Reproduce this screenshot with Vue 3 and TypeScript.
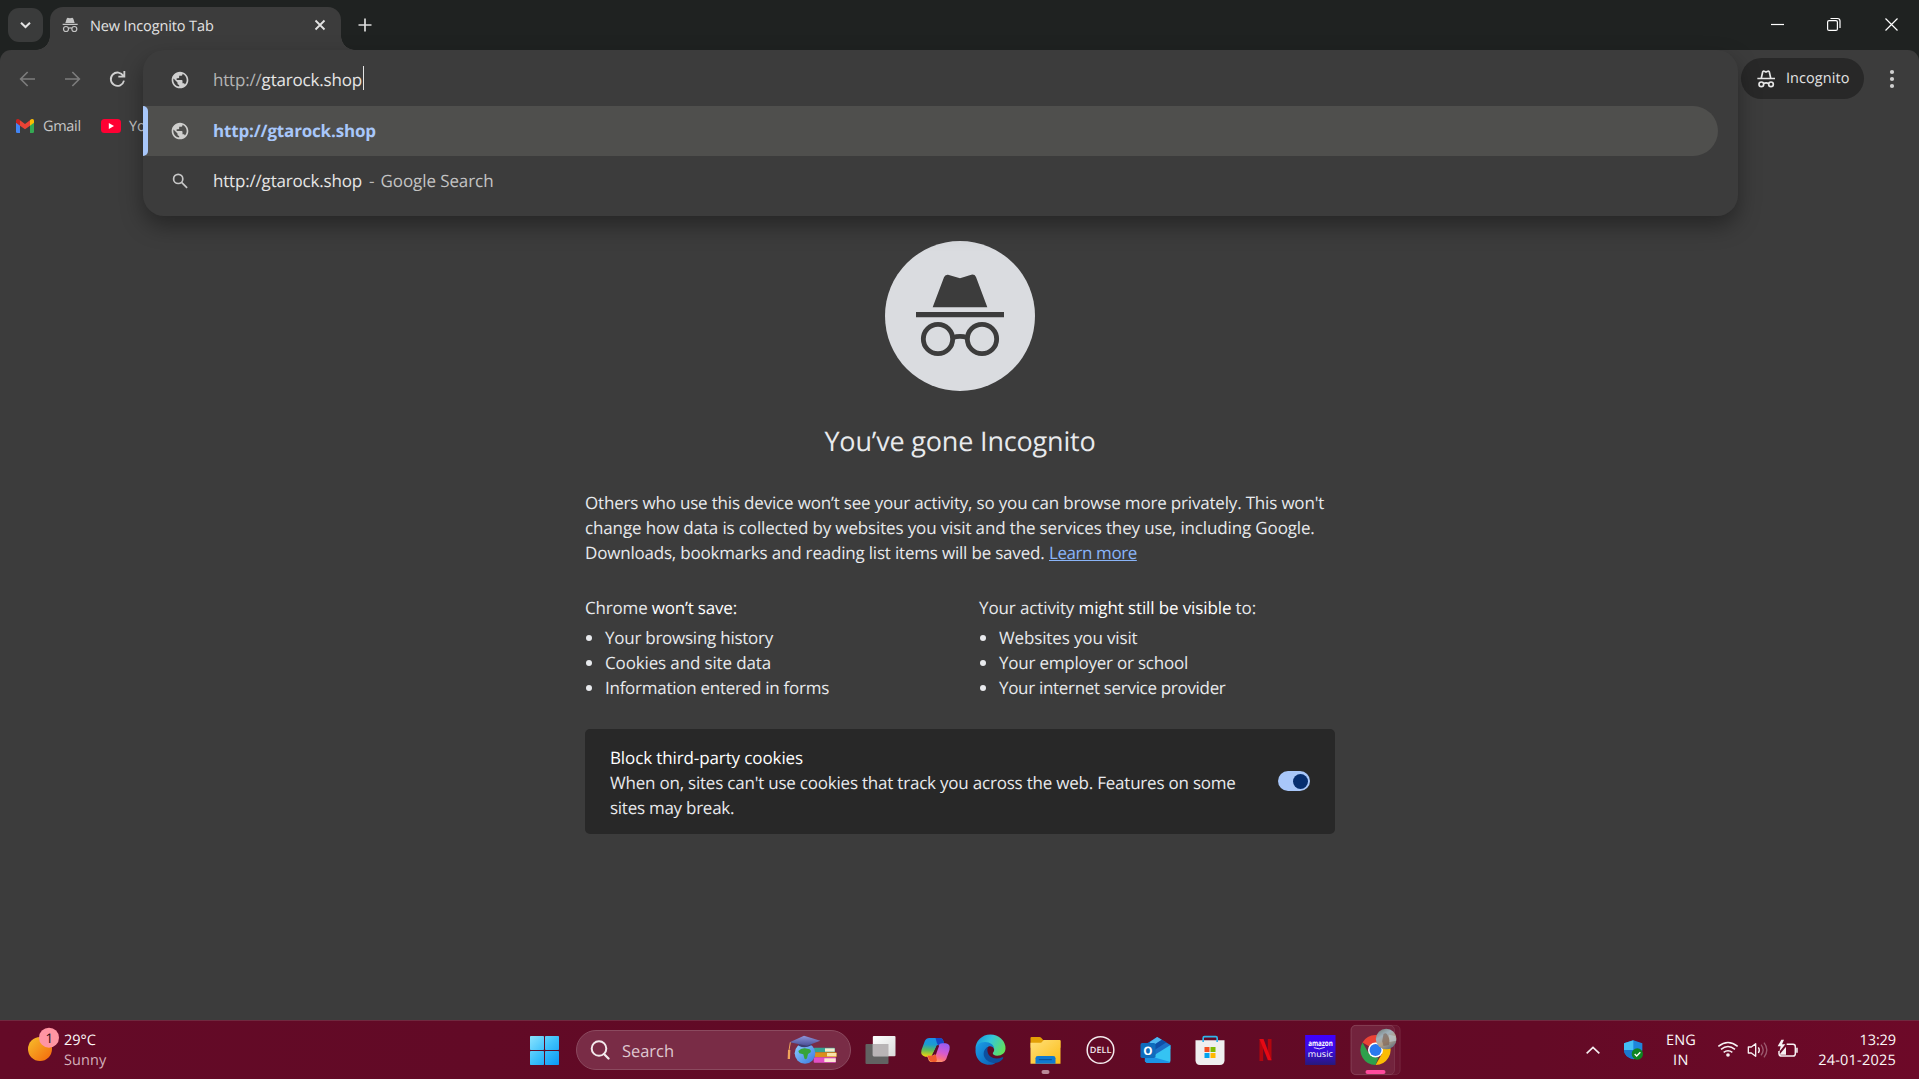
<script setup lang="ts">
interface Line {
  text: string
  track: number
}

const intro: Line[] = [
  { text: "Others who use this device won’t see your activity, so you can browse more privately. This won't", track: -0.182 },
  { text: 'change how data is collected by websites you visit and the services they use, including Google.', track: -0.14 },
]

const kept: Line[] = [
  { text: 'Your browsing history', track: -0.25 },
  { text: 'Cookies and site data', track: -0.138 },
  { text: 'Information entered in forms', track: -0.265 },
]

const visible: Line[] = [
  { text: 'Websites you visit', track: -0.138 },
  { text: 'Your employer or school', track: -0.224 },
  { text: 'Your internet service provider', track: -0.316 },
]

const cookieText: Line[] = [
  { text: "When on, sites can't use cookies that track you across the web. Features on some", track: -0.214 },
  { text: 'sites may break.', track: -0.26 },
]

const spacing = (line: Line) => ({ letterSpacing: line.track + 'px' })

const globePath =
  'M12 2C6.48 2 2 6.48 2 12s4.48 10 10 10 10-4.48 10-10S17.52 2 12 2zm-1 17.93c-3.95-.49-7-3.85-7-7.93 0-.62.08-1.21.21-1.79L9 15v1c0 1.100.9 2 2 2v1.930zm6.900-2.540c-.26-.81-1-1.390-1.900-1.390h-1v-3c0-.55-.45-1-1-1H8v-2h2c.55 0 1-.45 1-1V7h2c1.100 0 2-.9 2-2v-.41c2.930 1.190 5 4.060 5 7.410 0 2.080-.8 3.970-2.100 5.390z'
</script>

<template>
  <div class="desktop">
    <header class="tabstrip">
      <div class="tab-search">
        <svg width="35" height="34" viewBox="24 24 105 102"><path d="M63 68l13.500 13 13.500-13" fill="none" stroke="#e3e3e3" stroke-width="6" /></svg>
      </div>
      <div class="tab">
        <svg class="tab-icon" width="16" height="16" viewBox="186 51 48 48" fill="#c4c4c4">
          <path d="M200 56q2-4 6-2l4 1 4-1q4-2 6 2l4 13h-28zM188 71h45v4h-45z" />
          <g fill="none" stroke="#c4c4c4" stroke-width="3.500"><circle cx="198" cy="87" r="7.500" /><circle cx="223" cy="87" r="7.500" /><path d="M205 85q5-3 11 0" /></g>
        </svg>
        <span class="tab-title">New Incognito Tab</span>
        <svg class="tab-close" width="14" height="14" viewBox="0 0 14 14"><path d="M2.500 2.500l9 9M11.500 2.500l-9 9" stroke="#e3e3e3" stroke-width="1.800" /></svg>
      </div>
      <svg class="new-tab" width="16" height="16" viewBox="0 0 16 16"><path d="M8 1.500v13M1.500 8h13" stroke="#dcdcdc" stroke-width="1.700" /></svg>
      <div class="window-buttons">
        <svg width="57" height="50" viewBox="0 0 57 50"><path d="M22 24.500h13" stroke="#fff" stroke-width="1.200" /></svg>
        <svg width="57" height="50" viewBox="0 0 57 50" fill="none" stroke="#fff" stroke-width="1.200"><rect x="21.600" y="20.600" width="9.800" height="9.800" rx="1.500" /><path d="M24.500 18.500h7q2.500 0 2.500 2.500v7" /></svg>
        <svg width="57" height="50" viewBox="0 0 57 50"><path d="M22.500 18.500l12 12M34.500 18.500l-12 12" stroke="#fff" stroke-width="1.200" /></svg>
      </div>
    </header>

    <div class="browser">
      <div class="toolbar">
        <svg class="nav" width="144" height="58" viewBox="0 150 432 174" fill="none" stroke-width="5">
          <path d="M105 237H63M83 216l-21 21 21 21" stroke="#7c7c7c" />
          <path d="M195 237h42M217 216l21 21-21 21" stroke="#7c7c7c" />
          <path d="M370 228a20 20 0 1 0 2 14M373 213v17h-18" stroke="#d0d0d0" stroke-width="5.500" />
        </svg>
        <div class="incognito-pill">
          <svg width="18" height="18" viewBox="171 207 54 54" fill="none" stroke="#e6e6e6" stroke-width="5">
            <path d="M172 232.500h53M184 231l4-18q1-4 5-2l5 2 5-2q4-2 5 2l4 18" />
            <circle cx="184" cy="250" r="7" /><circle cx="213" cy="250" r="7" /><path d="M190 248q8-5 17 0" />
          </svg>
          <span>Incognito</span>
        </div>
        <svg class="more" width="6" height="20" viewBox="0 0 6 20" fill="#d0d0d0"><circle cx="3" cy="3" r="2.100" /><circle cx="3" cy="10" r="2.100" /><circle cx="3" cy="17" r="2.100" /></svg>
      </div>

      <nav class="bookmarks">
        <svg width="18" height="14" viewBox="48 357 54 42">
          <path d="M48 366l12 9v24h-8q-4 0-4-4z" fill="#4285f4" />
          <path d="M102 366l-12 9v24h8q4 0 4-4z" fill="#34a853" />
          <path d="M90 361q5-6 10-3 2 2 2 5v5l-12 9z" fill="#fbbc04" />
          <path d="M60 361l15 11 15-11v16l-15 11-15-11z" fill="#ea4335" />
          <path d="M60 361q-5-6-10-3-2 2-2 5v5l12 9z" fill="#c5221f" />
        </svg>
        <span class="gmail">Gmail</span>
        <svg width="20" height="14" viewBox="0 0 20 14"><rect width="20" height="14" rx="3.500" fill="#ff0033" /><path d="M7.800 4v6l5.200-3z" fill="#fff" /></svg>
        <span class="youtube">Yo</span>
      </nav>

      <section class="omnibox">
        <div class="field">
          <svg width="20" height="20" viewBox="0 0 24 24" fill="#d0d0d0"><path :d="globePath" /></svg>
          <span class="url"><i>http://</i>gtarock.shop</span><b class="caret"></b>
        </div>
        <div class="suggestion active">
          <svg width="20" height="20" viewBox="0 0 24 24" fill="#cfcfcd"><path :d="globePath" /></svg>
          <span class="match">http://gtarock.shop</span>
        </div>
        <div class="suggestion">
          <svg width="20" height="20" viewBox="0 0 20 20" fill="none" stroke="#c7c7c7" stroke-width="1.700"><circle cx="8.200" cy="7.900" r="4.600" /><path d="M11.600 11.300l5.500 5.500" /></svg>
          <span class="query">http://gtarock.shop</span><span class="dash">-</span><span class="engine">Google Search</span>
        </div>
      </section>

      <main class="page">
        <svg class="hero" width="150" height="150" viewBox="75 63 450 450">
          <circle cx="300" cy="288" r="225" fill="#dadce0" />
          <path d="M218 262l34-90q3-9 12-8l36 11 34-11q10-2 14 7l34 91z" fill="#3c3c3c" />
          <path d="M168 276h264v16H168z" fill="#3c3c3c" />
          <g fill="none" stroke="#3c3c3c" stroke-width="14.500"><circle cx="234" cy="357" r="44" /><circle cx="366" cy="357" r="44" /><path d="M278 353q22-8 44 0" /></g>
        </svg>
        <h1>You’ve gone Incognito</h1>
        <div class="column">
          <p class="intro">
            <span v-for="line in intro" :key="line.text" class="line" :style="spacing(line)">{{ line.text }}</span>
            <span class="line"><span class="downloads">Downloads, bookmarks and reading list items will be saved.</span><a class="learn">Learn more</a></span>
          </p>
          <div class="lists">
            <div class="list">
              <h2 class="wont">Chrome <em>won’t save:</em></h2>
              <ul><li v-for="line in kept" :key="line.text" :style="spacing(line)">{{ line.text }}</li></ul>
            </div>
            <div class="list">
              <h2 class="might">Your activity <em>might still be visible</em> to:</h2>
              <ul><li v-for="line in visible" :key="line.text" :style="spacing(line)">{{ line.text }}</li></ul>
            </div>
          </div>
          <div class="cookies">
            <div class="cookies-text">
              <div class="line cookies-title">Block third-party cookies</div>
              <div v-for="line in cookieText" :key="line.text" class="line" :style="spacing(line)">{{ line.text }}</div>
            </div>
            <div class="toggle"><span></span></div>
          </div>
        </div>
      </main>
    </div>

    <footer class="taskbar">
      <div class="weather">
        <svg width="64" height="58" viewBox="0 33 192 174">
          <defs><linearGradient id="sun" x1="0" y1="0" x2="1" y2="1"><stop offset="0" stop-color="#f6c02c" /><stop offset="1" stop-color="#f4660b" /></linearGradient></defs>
          <circle cx="120" cy="117" r="36" fill="url(#sun)" />
          <circle cx="147" cy="83" r="30" fill="#ff95a3" />
          <text x="148" y="98" text-anchor="middle" font-size="40" fill="#2a0d14">1</text>
        </svg>
        <div class="stack now"><span class="temp">29°C</span><span class="sky">Sunny</span></div>
      </div>

      <div class="apps">
        <svg width="55" height="58" viewBox="21 33 165 174">
          <defs><linearGradient id="win" gradientUnits="userSpaceOnUse" x1="60" y1="78" x2="147" y2="165"><stop offset="0" stop-color="#8be3fd" /><stop offset=".5" stop-color="#3cc0fb" /><stop offset="1" stop-color="#0a96f5" /></linearGradient></defs>
          <g fill="url(#win)"><rect x="60" y="78" width="42" height="42" rx="2" /><rect x="105" y="78" width="42" height="42" rx="2" /><rect x="60" y="123" width="42" height="42" rx="2" /><rect x="105" y="123" width="42" height="42" rx="2" /></g>
        </svg>

        <div class="search">
          <svg width="20" height="20" viewBox="0 0 20 20" fill="none" stroke="#f3e9ec" stroke-width="2"><circle cx="9" cy="8.500" r="7.300" /><path d="M14 14l4.500 4.500" stroke-width="2.300" stroke-linecap="round" /></svg>
          <span>Search</span>
          <svg class="study" width="50" height="30" viewBox="832 76 150 90">
            <defs>
              <linearGradient id="globe" x1="0" y1="0" x2="1" y2="1"><stop offset="0" stop-color="#8fd0ff" /><stop offset="1" stop-color="#3a78e0" /></linearGradient>
              <linearGradient id="cap" x1="0" y1="0" x2="0" y2="1"><stop offset="0" stop-color="#8f96dc" /><stop offset="1" stop-color="#4b4f96" /></linearGradient>
            </defs>
            <rect x="912" y="114" width="64" height="14" rx="3" fill="#35a293" /><rect x="946" y="116" width="29" height="10" fill="#f4ecd0" />
            <rect x="914" y="128" width="67" height="15" rx="3" fill="#d98f1c" /><rect x="952" y="130" width="28" height="10" fill="#f8e3a8" />
            <rect x="912" y="143" width="67" height="16" rx="3" fill="#e24fc4" /><rect x="944" y="146" width="34" height="11" fill="#fae7d2" />
            <circle cx="886" cy="131" r="31" fill="url(#globe)" />
            <path d="M866 124q8-9 20-8l14 3q6 4 3 9l-8 5-3 13q-5 6-8 0l-3-12-12-3z" fill="#37a33a" />
            <path d="M867 94v14q18 10 38-1V92z" fill="#3c3e72" />
            <path d="M840 98l43-20 49 15-40 15z" fill="url(#cap)" />
            <path d="M842 98l-4 24" stroke="#f0a65a" stroke-width="3" /><path d="M835 121h7l-1 27h-7z" fill="#f1a35b" />
          </svg>
        </div>

        <!-- task view -->
        <svg width="55" height="58" viewBox="10.500 33 165 174">
          <defs><linearGradient id="tv" x1="0" y1="0" x2="1" y2="1"><stop offset="0" stop-color="#fff" /><stop offset="1" stop-color="#dadada" /></linearGradient></defs>
          <rect x="48" y="102" width="69" height="60" rx="3" fill="#626262" /><rect x="70" y="78" width="68" height="61" rx="3" fill="url(#tv)" /><path d="M70 102h47v37H73q-3 0-3-3z" fill="#b9b4b6" />
        </svg>
        <!-- copilot -->
        <svg width="55" height="58" viewBox="175.500 33 165 174">
          <defs>
            <linearGradient id="cp1" x1=".4" y1="0" x2=".3" y2="1"><stop offset="0" stop-color="#1b8fe8" /><stop offset=".35" stop-color="#1c9bd0" /><stop offset=".65" stop-color="#5dbb5a" /><stop offset="1" stop-color="#f3d40b" /></linearGradient>
            <linearGradient id="cp2" x1=".7" y1="0" x2=".3" y2="1"><stop offset="0" stop-color="#9a5cf0" /><stop offset=".45" stop-color="#d65ad0" /><stop offset=".75" stop-color="#fb6f82" /><stop offset="1" stop-color="#ffb259" /></linearGradient>
          </defs>
          <path d="M240 84h30q9 0 12 10l3 10h-15q-8 0-11 9l-14 27h-18q-15-3-11-20l10-27q4-9 14-9z" fill="url(#cp1)" />
          <path d="M258 84h13q8 0 11 10l4 13h-13q-9 0-11-9z" fill="#1546c8" />
          <path d="M277 156h-29q-10 0-12-10l-4-9h14q8 0 11-9l10-21q3-7 11-7h11q15 2 11 20l-10 28q-4 8-13 8z" fill="url(#cp2)" />
          <path d="M234 137h16q5 0 8-8l4 20q1 7-8 7-12 1-15-7z" fill="#f05b2d" />
          <path d="M262 106l-11 26 8 2 10-27z" fill="#5c0926" />
        </svg>
        <!-- edge -->
        <svg width="55" height="58" viewBox="340.500 33 165 174">
          <defs>
            <linearGradient id="e1" x1="0" y1=".2" x2="1" y2=".6"><stop offset="0" stop-color="#1695dc" /><stop offset=".45" stop-color="#34c6dc" /><stop offset="1" stop-color="#62e05c" /></linearGradient>
            <linearGradient id="e2" x1="0" y1="0" x2="1" y2="1"><stop offset="0" stop-color="#1ba0e8" /><stop offset="1" stop-color="#0b5cb4" /></linearGradient>
          </defs>
          <path d="M378 116a45 42 0 0 1 90-1c0 15-11 22-25 22-9 0-14-4-13-8 1-3 4-4 4-10 0-8-10-15-22-15-17 0-29 6-34 12z" fill="url(#e1)" />
          <path d="M378 120c1-14 12-24 29-24 15 0 27 9 27 21-2-5-7-8-12-8-8 0-15 8-15 19 0 17 14 29 32 30-9 7-21 8-31 5-18-4-31-22-30-43z" fill="url(#e2)" />
          <path d="M411 113c-8 7-11 18-6 29 7 14 27 21 42 15 6-3 11-7 14-12 1-3-1-4-3-3-21 9-42 0-44-18-1-5 0-9 2-13z" fill="#0d4f9e" />
        </svg>
        <!-- file explorer -->
        <svg width="55" height="58" viewBox="505.500 33 165 174">
          <defs><linearGradient id="fe" x1="0" y1="0" x2="1" y2="1"><stop offset="0" stop-color="#ffe07a" /><stop offset="1" stop-color="#fcbc16" /></linearGradient></defs>
          <path d="M543 84q0-3 3-3h24q3 0 5 2l6 7h49q3 0 3 3v20h-90z" fill="#e3a006" />
          <path d="M543 98h32l8-8h47q3 0 3 3v68h-90z" fill="url(#fe)" />
          <path d="M558 161v-16q0-7 7-7h46q7 0 7 7v16z" fill="#1079cf" /><path d="M568 149h39" stroke="#0a4f94" stroke-width="3" />
          <rect x="576" y="180" width="24" height="12" rx="6" fill="#ba8998" />
        </svg>
        <!-- dell -->
        <svg width="55" height="58" viewBox="670.500 33 165 174">
          <circle cx="753" cy="120" r="40" fill="none" stroke="#f3e9ec" stroke-width="4.500" />
          <text x="721" y="129" font-size="26" font-weight="600" fill="#f3e9ec" textLength="65" lengthAdjust="spacingAndGlyphs">DELL</text>
        </svg>
        <!-- outlook -->
        <svg width="55" height="58" viewBox="-4.500 33 165 174">
          <path d="M46 104l37-23 40 24v12l-40 20z" fill="#1c6fc7" /><path d="M62 95l21-14 14 8-40 26z" fill="#4fb8f0" /><path d="M97 89l14 8-44 28-10-9z" fill="#0f4fa8" />
          <path d="M123 105v46q0 8-8 8H58q-10 0-12-6z" fill="#35c3f3" /><path d="M46 134l77 22q-3 3-8 3H56q-10-1-10-8z" fill="#1c93e6" />
          <rect x="33" y="99" width="45" height="45" rx="5" fill="#0f6cbd" />
          <text x="55.500" y="134" text-anchor="middle" font-size="35" font-weight="700" fill="#fff">O</text>
        </svg>
        <!-- store -->
        <svg width="55" height="58" viewBox="160.500 33 165 174">
          <path d="M198 91h87v60q0 14-14 14h-59q-14 0-14-14z" fill="#efefef" />
          <path d="M221 96V84q0-4 4-4h34q4 0 4 4v12" fill="none" stroke="#31b5ec" stroke-width="5" />
          <rect x="225" y="111" width="15" height="15" fill="#f25022" /><rect x="243" y="111" width="15" height="15" fill="#7fba00" /><rect x="225" y="129" width="15" height="15" fill="#00a4ef" /><rect x="243" y="129" width="15" height="15" fill="#ffb900" />
        </svg>
        <!-- netflix -->
        <svg width="55" height="58" viewBox="325.500 33 165 174">
          <rect x="390" y="87" width="11" height="66" fill="#b1060f" /><rect x="415" y="87" width="11" height="64" fill="#b1060f" />
          <path d="M390 87h12l24 64-11-1z" fill="#e50914" />
        </svg>
        <!-- amazon music -->
        <svg width="55" height="58" viewBox="490.500 33 165 174">
          <defs><linearGradient id="am" x1="0" y1="0" x2="0" y2="1"><stop offset="0" stop-color="#3f00ff" /><stop offset=".5" stop-color="#3a0ce0" /><stop offset="1" stop-color="#27197a" /></linearGradient></defs>
          <rect x="527" y="75" width="91" height="90" fill="url(#am)" />
          <text x="536" y="108" font-size="24" font-weight="700" fill="#fff" textLength="74" lengthAdjust="spacingAndGlyphs">amazon</text>
          <path d="M553 113q17 8 33-1" fill="none" stroke="#fff" stroke-width="2.500" />
          <text x="535" y="141" font-size="26" fill="#fff" textLength="75" lengthAdjust="spacingAndGlyphs">music</text>
        </svg>
        <!-- chrome -->
        <svg width="55" height="58" viewBox="655.500 33 165 174">
          <defs><linearGradient id="photo" x1="0" y1="0" x2=".6" y2="1"><stop offset="0" stop-color="#6d756c" /><stop offset=".4" stop-color="#9fb0ba" /><stop offset=".7" stop-color="#b39f88" /><stop offset="1" stop-color="#6c7a84" /></linearGradient></defs>
          <rect x="665" y="46" width="147" height="148" rx="14" fill="#fff" fill-opacity=".05" stroke="#fff" stroke-opacity=".09" stroke-width="3" />
          <rect x="664" y="46" width="131" height="148" rx="14" fill="#fff" fill-opacity=".06" stroke="#fff" stroke-opacity=".09" stroke-width="3" />
          <path d="M738 120L699 97.500A45 45 0 0 1 777 97.500z" fill="#ea4335" />
          <path d="M738 97.500h39A45 45 0 0 1 738 165l19.500-34z" fill="#fbbc04" />
          <path d="M699 97.500L718.500 131l19.500 11.500h9L738 165A45 45 0 0 1 699 97.500z" fill="#2ea04c" />
          <circle cx="738" cy="120" r="22.500" fill="#fff" /><circle cx="738" cy="120" r="18" fill="#2a79ee" />
          <circle cx="770" cy="87" r="31" fill="url(#photo)" />
          <path d="M762 72q9-6 12 3l7 16-3 14-16 3-4-14z" fill="#7a5f50" opacity=".6" /><path d="M778 74l20 4 2 14-20 4z" fill="#b9c6cf" opacity=".7" />
          <rect x="708" y="180" width="60" height="12" rx="6" fill="#ff4a9d" />
        </svg>
      </div>

      <div class="tray">
        <svg width="90" height="58" viewBox="0 33 270 174">
          <path d="M50 130l19-18 19 18" fill="none" stroke="#f5edf0" stroke-width="5" />
          <path d="M190 91l27 9v20q0 20-27 28-28-8-28-28v-20z" fill="#1e86dc" /><path d="M190 91v29h-28v-20z" fill="#43c0f5" /><path d="M190 120v28q-28-8-28-28z" fill="#1a78cf" />
          <circle cx="202" cy="132" r="17" fill="#0f8420" /><path d="M194 132l6 6 11-11" fill="none" stroke="#fff" stroke-width="4" />
        </svg>
        <div class="stack lang"><span class="eng">ENG</span><span class="in">IN</span></div>
        <svg class="status" width="90" height="58" viewBox="438 33 270 174" fill="none" stroke="#f7f1f3">
          <path d="M445 109q29-23 58 0M453 118q21-17 42 0M461 127q13-10 26 0" stroke-width="4.500" /><circle cx="474" cy="135" r="5.500" fill="#f7f1f3" stroke="none" />
          <path d="M535 111h9l13-10v38l-13-10h-9z" stroke-width="4" stroke-linejoin="round" /><path d="M565 112q6 8 0 17" stroke-width="4" />
          <path d="M573 104q13 16 0 32M582 98q17 22 0 44" stroke-width="4" opacity=".35" />
          <path d="M650 103h19q7 0 7 7v21q0 7-7 7h-34q-8 0-8-7v-8M681 113v15" stroke-width="4.500" />
          <path d="M634 89l-11 20h9l-4 16 18-22h-10l6-14z" fill="#f7f1f3" stroke="none" /><path d="M628 134l20-24v24z" fill="#f7f1f3" stroke="none" />
        </svg>
        <div class="stack clock"><span class="time">13:29</span><span class="date">24-01-2025</span></div>
      </div>
    </footer>
  </div>
</template>

<style>
body {
  background: #3c3c3c;
}
</style>

<style scoped>
.desktop {
  display: flex;
  flex-direction: column;
  width: 1919px;
  height: 1079px;
  overflow: hidden;
  background: #1f2221;
  font-family: 'Open Sans', 'Noto Sans', sans-serif;
  font-size: 17px;
  color: #e8eaed;
  text-rendering: geometricPrecision;
  white-space: nowrap;
}
svg {
  display: block;
  flex: none;
}
.tabstrip {
  display: flex;
  flex: none;
  height: 50px;
}
.tab-search {
  margin: 8px 7px 0 8px;
  width: 35px;
  height: 34px;
  border-radius: 11px;
  background: #3a3b3b;
}
.tab {
  position: relative;
  display: flex;
  align-items: center;
  box-sizing: border-box;
  width: 291px;
  height: 43px;
  margin-top: 7px;
  padding: 0 14px 7px 12px;
  border-radius: 13px 13px 0 0;
  background: #3c3c3c;
}
.tab::before,
.tab::after {
  content: '';
  position: absolute;
  bottom: 0;
  width: 14px;
  height: 14px;
}
.tab::before {
  left: -14px;
  background: radial-gradient(circle at 0 0, transparent 13.5px, #3c3c3c 14px);
}
.tab::after {
  right: -14px;
  background: radial-gradient(circle at 100% 0, transparent 13.5px, #3c3c3c 14px);
}
.tab-title {
  margin-left: 12px;
  padding-top: 2px;
  font-size: 14.5px;
  letter-spacing: -0.12px;
  color: #e3e3e3;
}
.tab-close {
  margin-left: auto;
}
.new-tab {
  margin: 17px 0 0 16px;
}
.window-buttons {
  display: flex;
  margin-left: auto;
  margin-right: -1px;
}
.browser {
  position: relative;
  display: flex;
  flex-direction: column;
  flex: 1;
  background: #3c3c3c;
  border-radius: 11px 11px 0 0;
}
.toolbar {
  display: flex;
  align-items: center;
  height: 58px;
}
.incognito-pill {
  display: flex;
  align-items: center;
  box-sizing: border-box;
  width: 123px;
  height: 41px;
  margin: 0 0 1px auto;
  padding-left: 16px;
  border-radius: 21px;
  background: #282828;
  color: #e3e3e3;
  font-size: 14.5px;
  letter-spacing: 0.063px;
}
.incognito-pill span {
  margin-left: 11px;
}
.more {
  margin: 0 24px 0 25px;
}
.bookmarks {
  display: flex;
  align-items: center;
  box-sizing: border-box;
  width: 146px;
  height: 36px;
  padding-left: 16px;
  font-size: 14.5px;
  color: #c7c7c7;
}
.gmail {
  width: 38px;
  margin: 0 20px 0 9px;
  letter-spacing: -0.32px;
}
.youtube {
  margin-left: 8px;
}
.omnibox {
  position: absolute;
  top: 0;
  left: 143px;
  width: 1595px;
  height: 166px;
  border-radius: 21px;
  background: #3c3c3c;
  box-shadow: 0 10px 22px rgba(0, 0, 0, 0.36);
}
.field,
.suggestion {
  display: flex;
  align-items: center;
  height: 50px;
  padding-left: 27px;
}
.field {
  height: 56px;
  box-sizing: border-box;
  padding-top: 3px;
}
.field svg,
.suggestion svg {
  margin-right: 23px;
}
.url,
.query {
  letter-spacing: -0.184px;
  color: #e6e6e6;
}
.url i {
  font-style: normal;
  color: #b4b4b4;
}
.caret {
  width: 1px;
  height: 24px;
  margin: -3px 0 0 1px;
  background: #e3e3e3;
}
.suggestion span {
  margin-top: -2px;
}
.active {
  position: relative;
  width: 1548px;
  border-radius: 0 25px 25px 0;
  background: #4f4f4d;
}
.active::before {
  content: '';
  position: absolute;
  left: 0;
  top: 0;
  width: 5px;
  height: 50px;
  border-radius: 0 5px 5px 0;
  background: #a8c7fa;
}
.match {
  font-weight: 700;
  letter-spacing: -0.17px;
  color: #a8c7fa;
}
.dash {
  margin: 0 6px 0 7px;
  color: #b9b9b9;
}
.engine {
  letter-spacing: -0.088px;
  color: #c4c4c4;
}
.page {
  display: flex;
  flex-direction: column;
  align-items: center;
  padding: 97px 0 0 1px;
}
h1 {
  margin: 31px 0;
  font-size: 27px;
  font-weight: 400;
  line-height: 37px;
  letter-spacing: -0.18px;
}
.column {
  width: 750px;
  line-height: 25px;
}
.intro {
  margin: 0;
}
.line {
  display: block;
  height: 25px;
}
.downloads {
  letter-spacing: -0.195px;
}
.learn {
  margin-left: 4.5px;
  letter-spacing: -0.43px;
  color: #8ab4f8;
  text-decoration: underline;
}
.lists {
  display: flex;
  margin-top: 30px;
}
.list {
  flex: none;
  width: 394px;
}
h2 {
  margin: 0 0 5px;
  font-size: 17px;
  font-weight: 400;
}
h2 em {
  font-style: normal;
  color: #fff;
}
.wont {
  letter-spacing: -0.181px;
}
.might {
  letter-spacing: -0.12px;
}
ul {
  margin: 0;
  padding: 0;
  list-style: none;
}
li {
  display: flex;
  align-items: center;
  height: 25px;
}
li::before {
  content: '';
  width: 6px;
  height: 6px;
  margin: 0 13px 0 1px;
  border-radius: 50%;
  background: #e8eaed;
}
.cookies {
  display: flex;
  align-items: center;
  justify-content: space-between;
  box-sizing: border-box;
  height: 105px;
  margin-top: 29px;
  padding: 0 25px;
  border-radius: 5px;
  background: #282828;
}
.cookies-text {
  padding-top: 2px;
}
.cookies-title {
  letter-spacing: -0.114px;
  color: #fff;
}
.toggle {
  display: flex;
  justify-content: flex-end;
  align-items: center;
  box-sizing: border-box;
  width: 32px;
  height: 20px;
  margin-bottom: 1px;
  padding-right: 2px;
  border-radius: 10px;
  background: #a8c7fa;
}
.toggle span {
  width: 15px;
  height: 15px;
  border-radius: 50%;
  background: #062e6f;
}
.taskbar {
  display: flex;
  flex: none;
  box-sizing: border-box;
  height: 59px;
  border-top: 1px solid #70293f;
  background: linear-gradient(90deg, #640a27, #600a25 50%, #640a26 80%, #6d0928);
  font-size: 14.5px;
  color: #fbf7f8;
}
.weather {
  display: flex;
  width: 517px;
}
.stack {
  display: flex;
  flex-direction: column;
  line-height: 20px;
  padding-top: 8.5px;
}
.now {
  padding-top: 9.5px;
}
.temp {
  letter-spacing: 0.016px;
}
.sky {
  letter-spacing: 0.119px;
  color: #d3b0bb;
}
.apps {
  display: flex;
}
.search {
  display: flex;
  align-items: center;
  box-sizing: border-box;
  width: 275px;
  height: 40px;
  margin: 9px 2px 0 4px;
  padding-left: 13px;
  border: 1px solid #8b4a5f;
  border-radius: 20px;
  background: #792c46;
  font-size: 16.5px;
  letter-spacing: -0.042px;
  color: #dfc8d0;
}
.search span {
  margin-left: 12px;
}
.study {
  margin-left: auto;
  margin-right: 13px;
}
.tray {
  display: flex;
  width: 349px;
  margin-left: auto;
}
.lang {
  width: 38px;
  padding: 9.5px 10px 0 2px;
  align-items: center;
  box-sizing: content-box;
}
.eng {
  letter-spacing: 0.156px;
}
.in {
  letter-spacing: 0.5px;
}
.status {
  margin-left: 6px;
}
.clock {
  flex: 1;
  align-items: flex-end;
  padding: 9.5px 23px 0 0;
}
.date {
  letter-spacing: 0.22px;
}
.time {
  letter-spacing: -0.097px;
}
</style>
